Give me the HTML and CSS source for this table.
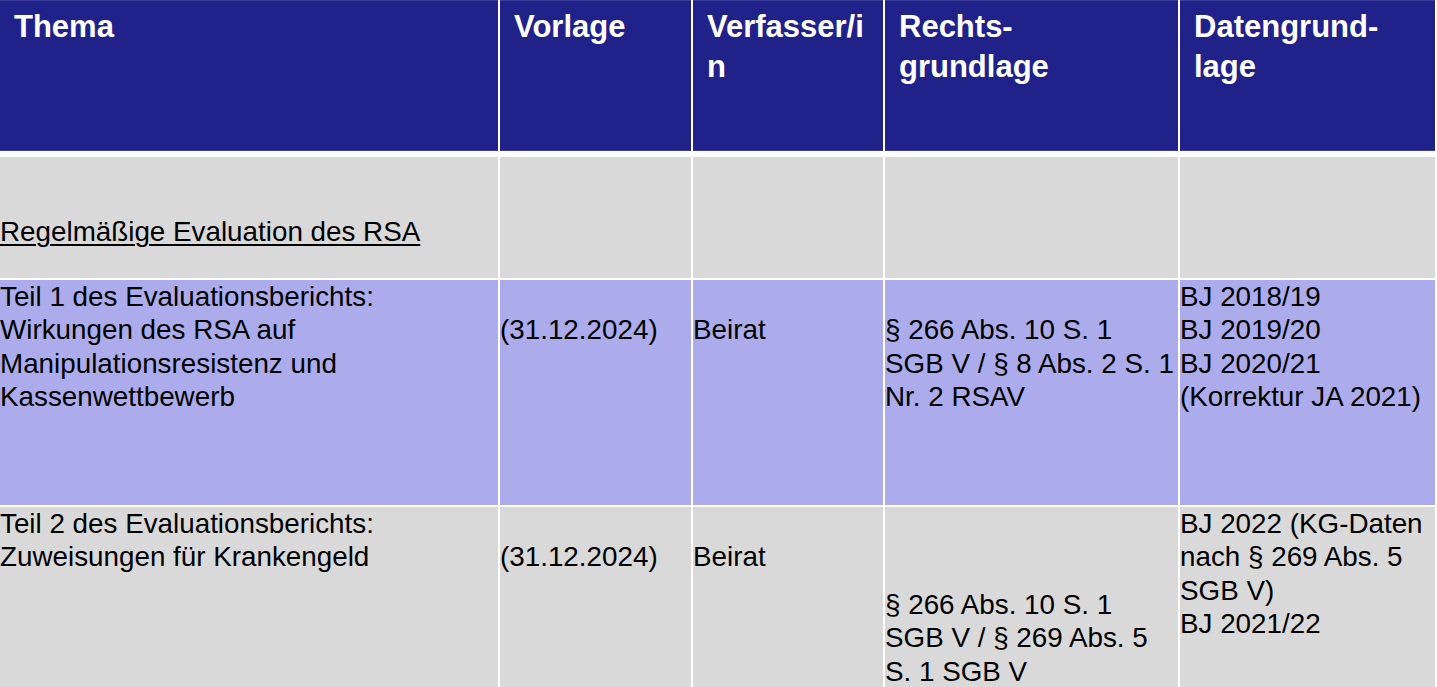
FILE: index.html
```html
<!DOCTYPE html>
<html lang="de">
<head>
<meta charset="utf-8">
<title>RSA Evaluation</title>
<link rel="stylesheet" href="styles.css">
</head>
<body>
<div class="table">
  <div class="cell head">Thema</div>
  <div class="cell head">Vorlage</div>
  <div class="cell head">Verfasser/i<br>n</div>
  <div class="cell head">Rechts-<br>grundlage</div>
  <div class="cell head">Datengrund-<br>lage</div>

  <div class="cell grey section"><span class="ul">Regelmäßige Evaluation des RSA</span></div>
  <div class="cell grey"></div>
  <div class="cell grey"></div>
  <div class="cell grey"></div>
  <div class="cell grey"></div>

  <div class="cell lilac">Teil 1 des Evaluationsberichts:<br>Wirkungen des RSA auf<br>Manipulationsresistenz und<br>Kassenwettbewerb</div>
  <div class="cell lilac line2">(31.12.2024)</div>
  <div class="cell lilac line2">Beirat</div>
  <div class="cell lilac line2">§ 266 Abs. 10 S. 1<br>SGB V / § 8 Abs. 2 S. 1<br>Nr. 2 RSAV</div>
  <div class="cell lilac">BJ 2018/19<br>BJ 2019/20<br>BJ 2020/21<br>(Korrektur JA 2021)</div>

  <div class="cell grey">Teil 2 des Evaluationsberichts:<br>Zuweisungen für Krankengeld</div>
  <div class="cell grey line2">(31.12.2024)</div>
  <div class="cell grey line2">Beirat</div>
  <div class="cell grey low">§ 266 Abs. 10 S. 1<br>SGB V / § 269 Abs. 5<br>S. 1 SGB V</div>
  <div class="cell grey">BJ 2022 (KG-Daten<br>nach § 269 Abs. 5<br>SGB V)<br>BJ 2021/22</div>
</div>
</body>
</html>
```

FILE: styles.css
```css
html, body {
  margin: 0;
  padding: 0;
  background: #ffffff;
}

body {
  width: 1437px;
  height: 687px;
  overflow: hidden;
  font-family: "Liberation Sans", Arial, sans-serif;
}

.table {
  display: grid;
  grid-template-columns: 498px 191px 190px 293px 255px;
  grid-template-rows: 155px 121px 225px 184px;
  column-gap: 2px;
  row-gap: 2px;
  padding-right: 2px;
  background: #ffffff;
}

.cell {
  font-size: 27.8px;
  line-height: 33.4px;
  color: #000000;
  white-space: nowrap;
  padding: 0;
}

.head {
  background: #20228a;
  color: #ffffff;
  font-weight: bold;
  font-size: 31px;
  line-height: 40px;
  padding: 6px 0 0 14px;
  border-top: 1px solid #3a3c9a;
  border-bottom: 1px solid #3a3c9a;
  box-sizing: border-box;
  margin-bottom: 4px;
}

.grey {
  background: #d9d9d9;
}

.lilac {
  background: #acacec;
}

.section {
  padding-top: 58px;
}

.ul {
  text-decoration: underline;
  text-decoration-thickness: 2px;
  text-underline-offset: 3px;
}

.line2 {
  padding-top: 33.4px;
}

.low {
  padding-top: 81px;
}
```
